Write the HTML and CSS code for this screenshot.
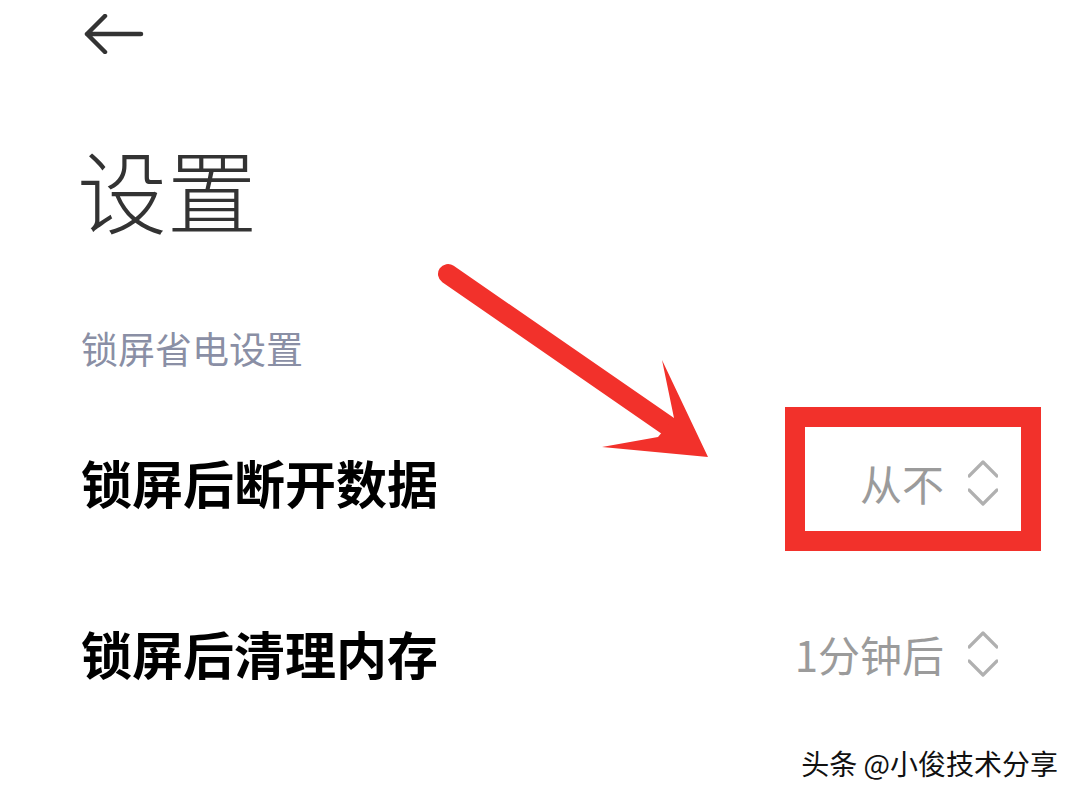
FILE: index.html
```html
<!DOCTYPE html>
<html lang="zh-CN">
  <head>
    <meta charset="UTF-8" />
    <meta name="viewport" content="width=device-width, initial-scale=1.0" />
    <title>设置</title>
    <link rel="stylesheet" href="styles.css">
  </head>
  <body>
    <div class="page">
      <div class="topbar">
        <svg class="back" width="60" height="40" viewBox="0 0 60 40">
          <path d="M57 20H3M21 2L3 20L21 38" fill="none" stroke="#333" stroke-width="4.5" stroke-linecap="round" stroke-linejoin="round"/>
        </svg>
      </div>
      <h1 class="title">设置</h1>
      <div class="section-label">锁屏省电设置</div>
      <div class="row">
        <span class="row-name">锁屏后断开数据</span>
        <span class="row-value">
          从不
          <svg class="updown" width="30" height="48" viewBox="0 0 30 48">
            <path d="M1 17L15 3L29 17M1 31L15 45L29 31" fill="none" stroke="#b0b0b0" stroke-width="3.2" stroke-linecap="round" stroke-linejoin="round"/>
          </svg>
        </span>
      </div>
      <div class="row">
        <span class="row-name">锁屏后清理内存</span>
        <span class="row-value">
          1分钟后
          <svg class="updown" width="30" height="48" viewBox="0 0 30 48">
            <path d="M1 17L15 3L29 17M1 31L15 45L29 31" fill="none" stroke="#b0b0b0" stroke-width="3.2" stroke-linecap="round" stroke-linejoin="round"/>
          </svg>
        </span>
      </div>

      <!-- annotation drawn over the screenshot -->
      <svg class="markup" width="1080" height="806" viewBox="0 0 1080 806">
        <line x1="448" y1="274" x2="668" y2="426" stroke="#f2312b" stroke-width="20" stroke-linecap="round"/>
        <polygon points="662,360 708,457 602,447 658,437 674,418" fill="#f2312b"/>
        <rect x="795" y="417" width="236" height="124" fill="none" stroke="#f2312b" stroke-width="20"/>
      </svg>

      <div class="watermark">头条 @小俊技术分享</div>
    </div>
  </body>
</html>
```

FILE: styles.css
```css
body {
  margin: 0;
  background: #fff;
  font-family: "Noto Sans CJK SC", "Noto Sans", sans-serif;
}
.page {
  position: relative;
  width: 1080px;
  height: 806px;
  overflow: hidden;
}
.topbar {
  padding: 14px 0 0 84px;
  height: 40px;
}
.back {
  display: block;
}
.title {
  margin: 89px 0 0 77px;
  font-size: 90px;
  line-height: 1;
  font-weight: 300;
  color: #333;
}
.section-label {
  margin: 97px 0 0 81px;
  font-size: 37px;
  line-height: 1;
  color: #8a8fa5;
}
.row {
  display: flex;
  align-items: center;
  justify-content: space-between;
  height: 171px;
  padding: 0 82px 0 81px;
}
.section-label + .row {
  margin-top: 30px;
}
.row-name {
  font-size: 51px;
  font-weight: bold;
  color: #000;
  line-height: 1;
}
.row-value {
  display: flex;
  align-items: center;
  gap: 24px;
  font-size: 42px;
  line-height: 1;
  color: #9b9b9b;
}
.updown {
  display: block;
}
.markup {
  position: absolute;
  top: 0;
  left: 0;
  pointer-events: none;
}
.watermark {
  position: absolute;
  top: 747px;
  right: 22px;
  font-size: 28px;
  line-height: 1.2;
  color: #111;
  text-shadow: 1px 1px 0 #fff, -1px -1px 0 #fff, 1px -1px 0 #fff, -1px 1px 0 #fff;
}
```
